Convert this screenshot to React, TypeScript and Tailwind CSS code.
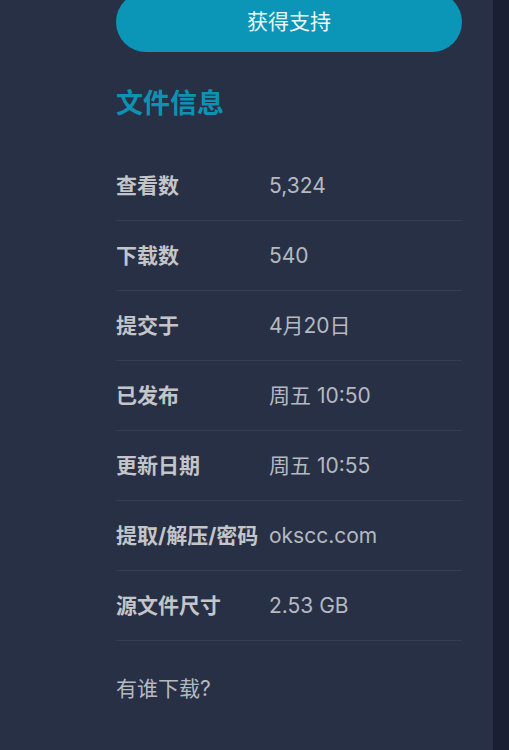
const rows: [string, string][] = [
  ["查看数", "5,324"],
  ["下载数", "540"],
  ["提交于", "4月20日"],
  ["已发布", "周五 10:50"],
  ["更新日期", "周五 10:55"],
  ["提取/解压/密码", "okscc.com"],
  ["源文件尺寸", "2.53 GB"],
];

export default function App() {
  return (
    <div
      className="flex h-[750px] w-[509px] overflow-hidden bg-[#1a1f33]"
      style={{ fontFamily: '"Inter", "Noto Sans CJK SC", sans-serif' }}
    >
      <div className="w-[493px] bg-[#283046] pl-[116px] pr-[31px]">
        <button className="-mt-[8px] flex h-[60px] w-full items-center justify-center rounded-full bg-[#0b96b8] text-[21px] text-[#eef6f9]">
          获得支持
        </button>

        <h3 className="mt-[34px] text-[27px] font-bold leading-[36px] text-[#0e92b4]">
          文件信息
        </h3>

        <dl className="mt-[29px]">
          {rows.map(([label, value]) => (
            <div
              key={label}
              className="flex h-[70px] items-center border-b border-[#353d54]"
            >
              <dt className="w-[153px] shrink-0 text-[21px] font-bold text-[#c4c5c8]">
                {label}
              </dt>
              <dd className="text-[21px] text-[#b6b9c0]">{value}</dd>
            </div>
          ))}
        </dl>

        <p className="mt-[32px] text-[21px] text-[#b6b9c0]">有谁下载?</p>
      </div>
    </div>
  );
}
